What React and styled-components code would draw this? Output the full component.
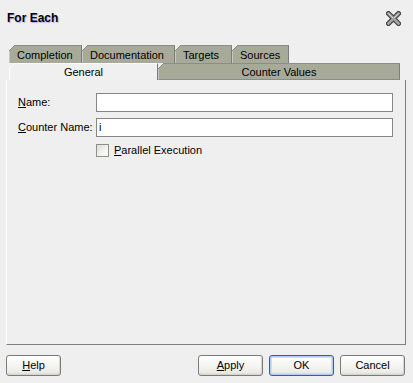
import React from "react";
import styled, { createGlobalStyle } from "styled-components";

const Global = createGlobalStyle`
  html, body { margin: 0; padding: 0; background: #efefef; }
  body { font-family: "Liberation Sans", Arial, sans-serif; font-size: 11px; color: #000; }
`;

const Dialog = styled.div`
  width: 413px;
  height: 383px;
  background: #efefef;
  display: flex;
  flex-direction: column;
  overflow: hidden;
`;

const Header = styled.div`
  height: 45px;
  box-sizing: border-box;
  padding: 10px 12px 0 7px;
  display: flex;
  justify-content: space-between;
  align-items: flex-start;
`;

const Title = styled.div`
  font-weight: bold;
  font-size: 12px;
  line-height: 14px;
  margin-top: 1px;
  color: #000;
  text-shadow: 1px 1px 1px #b4b4f0;
`;

const CloseBtn = styled.div`
  width: 15px;
  height: 15px;
  margin-top: 1px;
`;

const TabStrip = styled.div`
  height: 35px;
  display: flex;
  flex-direction: column;
  padding-left: 9px;
`;

const TabRow = styled.div`
  display: flex;
  height: ${(p) => p.$h}px;
  align-items: stretch;
`;

const Tab = styled.div`
  position: relative;
  box-sizing: border-box;
  width: ${(p) => p.$w}px;
  background: ${(p) => (p.$selected ? "#f0f0f0" : "#a8aa99")};
  border-top: 1px solid ${(p) => (p.$selected ? "#ffffff" : "#8c8c8c")};
  border-left: 1px solid ${(p) => (p.$selected ? "#ffffff" : "#c8c8c0")};
  border-right: 1px solid #7c7c7c;
  border-bottom: ${(p) => (p.$front && !p.$selected ? "1px solid #8c8c8c" : "none")};
  display: flex;
  align-items: center;
  justify-content: ${(p) => (p.$center ? "center" : "flex-start")};
  padding-left: ${(p) => (p.$center ? 0 : 7)}px;
  padding-top: 1px;
  font-size: 11px;
  line-height: 13px;
  white-space: nowrap;
  &::before {
    content: "";
    position: absolute;
    top: -1px;
    left: -1px;
    width: 6px;
    height: 6px;
    background: linear-gradient(
      135deg,
      #efefef 0 42%,
      ${(p) => (p.$selected ? "#ffffff" : "#8c8c8c")} 42% 58%,
      transparent 58%
    );
  }
`;

const Panel = styled.div`
  box-sizing: border-box;
  margin-left: 6px;
  width: 400px;
  height: 265px;
  border-left: 1px solid #ffffff;
  border-right: 1px solid #808080;
  border-bottom: 1px solid #808080;
  padding: 13px 0 0 11px;
`;

const Form = styled.div`
  display: grid;
  grid-template-columns: 78px 297px;
  row-gap: 6px;
  align-items: center;
`;

const Label = styled.label`
  font-size: 11px;
  line-height: 13px;
  white-space: nowrap;
`;

const U = styled.span`
  text-decoration: underline;
`;

const Input = styled.div`
  box-sizing: border-box;
  height: 19px;
  background: #ffffff;
  border: 1px solid #868686;
  padding: 2px 2px 0;
  font-size: 11px;
  line-height: 13px;
`;

const CheckRow = styled.div`
  grid-column: 2;
  display: flex;
  align-items: center;
  gap: 5px;
  margin-top: 1px;
`;

const CheckBox = styled.div`
  box-sizing: border-box;
  width: 13px;
  height: 13px;
  border: 1px solid #8e8f8f;
  background: linear-gradient(135deg, #dcdcd6 0%, #f4f4f0 60%, #ffffff 100%);
`;

const Footer = styled.div`
  display: flex;
  align-items: flex-start;
  padding: 10px 8px 0 6px;
`;

const Spacer = styled.div`
  flex: 1;
`;

const Button = styled.button`
  box-sizing: border-box;
  width: ${(p) => p.$w}px;
  height: 21px;
  margin-left: ${(p) => p.$ml || 0}px;
  padding: 0;
  border: 1px solid ${(p) => (p.$default ? "#3c5a9c" : "#7b7b7b")};
  border-radius: 3px;
  background: linear-gradient(#ffffff 0%, #f6f6f3 45%, #ecebe6 85%, #d8d6cf 100%);
  box-shadow: ${(p) =>
    p.$default
      ? "inset 0 0 0 1px #b6cbf1, inset 0 0 0 2px #cfdcf5"
      : "inset -1px -1px 0 #d6d4cc"};
  font-family: "Liberation Sans", Arial, sans-serif;
  font-size: 11px;
  line-height: 13px;
  color: #000;
`;

const CloseIcon = () => (
  <svg width="15" height="15" viewBox="0 0 15 15">
    <path d="M2.5 2.5 L12.5 12.5 M12.5 2.5 L2.5 12.5" stroke="#444" strokeWidth="5" strokeLinecap="square" />
    <path d="M2.5 2.5 L12.5 12.5 M12.5 2.5 L2.5 12.5" stroke="#a4a4a4" strokeWidth="2.6" strokeLinecap="square" />
    <path d="M3 3 L7 7 M12 3 L8 7" stroke="#d4d4d4" strokeWidth="1" />
  </svg>
);

export default function App() {
  return (
    <>
      <Global />
      <Dialog>
        <Header>
          <Title>For Each</Title>
          <CloseBtn>
            <CloseIcon />
          </CloseBtn>
        </Header>
        <TabStrip>
          <TabRow $h={18}>
            <Tab $w={73}>Completion</Tab>
            <Tab $w={93}>Documentation</Tab>
            <Tab $w={57}>Targets</Tab>
            <Tab $w={57}>Sources</Tab>
          </TabRow>
          <TabRow $h={17}>
            <Tab $w={149} $center $selected $front>General</Tab>
            <Tab $w={242} $center $front>Counter Values</Tab>
          </TabRow>
        </TabStrip>
        <Panel>
          <Form>
            <Label><U>N</U>ame:</Label>
            <Input />
            <Label><U>C</U>ounter Name:</Label>
            <Input>i</Input>
            <CheckRow>
              <CheckBox />
              <Label><U>P</U>arallel Execution</Label>
            </CheckRow>
          </Form>
        </Panel>
        <Footer>
          <Button $w={55}><U>H</U>elp</Button>
          <Spacer />
          <Button $w={65}><U>A</U>pply</Button>
          <Button $w={65} $ml={6} $default>OK</Button>
          <Button $w={65} $ml={6}>Cancel</Button>
        </Footer>
      </Dialog>
    </>
  );
}
